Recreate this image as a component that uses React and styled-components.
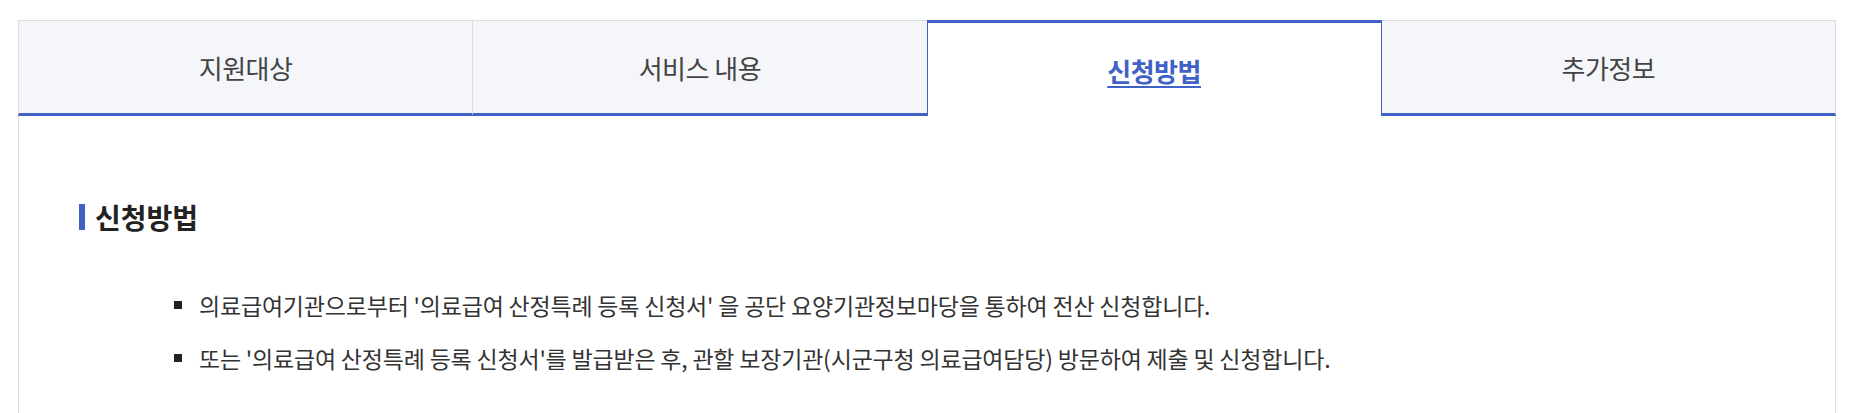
import React, { useState } from 'react';
import styled, { createGlobalStyle, css } from 'styled-components';

const GlobalStyle = createGlobalStyle`
	html, body {
		margin: 0;
		padding: 0;
		background: #fff;
	}

	body {
		font-family: 'Noto Sans CJK KR', 'Noto Sans', sans-serif;
		color: #333;
	}
`;

const blue = '#4062c6';
const line = '#dcdde1';

const Page = styled.div`
	padding: 20px 17px 0 18px;
`;

const TabList = styled.ul`
	display: flex;
	margin: 0;
	padding: 0;
	list-style: none;
`;

const Tab = styled.li`
	flex: 1;
	height: 96px;
	box-sizing: border-box;
	display: flex;
	align-items: center;
	justify-content: center;
	font-size: 26px;
	letter-spacing: -0.5px;
	cursor: pointer;

	${(props) =>
		props.active
			? css`
					background: #fff;
					border: 1px solid ${blue};
					border-top: 3px solid ${blue};
					border-bottom: none;
					color: ${blue};
					font-weight: 700;
					text-decoration: underline;
					text-underline-offset: 4px;
					text-decoration-thickness: 2px;
					padding-top: 1px;
			  `
			: css`
					background: #f4f6fa;
					border-top: 1px solid ${line};
					border-left: 1px solid ${line};
					border-bottom: 3px solid ${blue};
					color: #444;

					&:last-child {
						border-right: 1px solid ${line};
					}
			  `}

	${(props) =>
		props.afterActive &&
		css`
			border-left: none;
		`}
`;

const Panel = styled.div`
	border-left: 1px solid ${line};
	border-right: 1px solid ${line};
	padding: 84px 60px 40px;
	min-height: 260px;
`;

const Heading = styled.h3`
	display: flex;
	align-items: center;
	gap: 10px;
	margin: 0 0 55px;
	font-size: 28px;
	font-weight: 700;
	color: #222;
	line-height: 34px;

	&::before {
		content: '';
		width: 6px;
		height: 26px;
		background: ${blue};
	}
`;

const List = styled.ul`
	margin: 0;
	padding: 0 0 0 95px;
	list-style: none;
`;

const Item = styled.li`
	position: relative;
	padding-left: 25px;
	font-size: 23px;
	line-height: 32px;
	color: #333;
	letter-spacing: -0.2px;

	& + & {
		margin-top: 21px;
	}

	&::before {
		content: '';
		position: absolute;
		left: 0;
		top: 12px;
		width: 8px;
		height: 8px;
		background: #222;
	}
`;

const tabs = ['지원대상', '서비스 내용', '신청방법', '추가정보'];

export default function App() {
	const [current, setCurrent] = useState(2);

	return (
		<>
			<GlobalStyle />
			<Page>
				<TabList>
					{tabs.map((label, i) => (
						<Tab
							key={label}
							active={i === current}
							afterActive={i === current + 1}
							onClick={() => setCurrent(i)}
						>
							{label}
						</Tab>
					))}
				</TabList>
				<Panel>
					<Heading>신청방법</Heading>
					<List>
						<Item>
							의료급여기관으로부터 '의료급여 산정특례 등록 신청서' 을 공단
							요양기관정보마당을 통하여 전산 신청합니다.
						</Item>
						<Item>
							또는 '의료급여 산정특례 등록 신청서'를 발급받은 후, 관할
							보장기관(시군구청 의료급여담당) 방문하여 제출 및 신청합니다.
						</Item>
					</List>
				</Panel>
			</Page>
		</>
	);
}
